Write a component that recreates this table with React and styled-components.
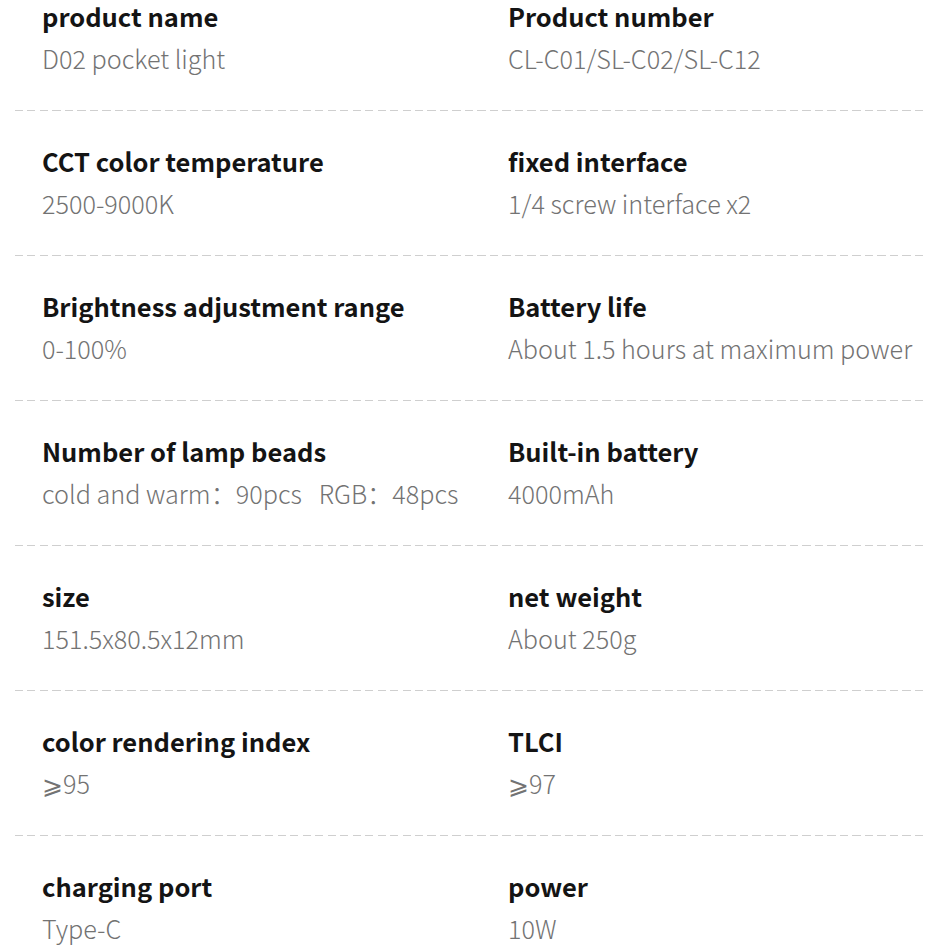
import React from "react";
import styled, { createGlobalStyle } from "styled-components";

const Global = createGlobalStyle`
  html, body { margin: 0; padding: 0; background: #ffffff; }
  body { font-family: "Noto Sans CJK SC", "Source Sans Pro", "Noto Sans", sans-serif; }
`;

const Page = styled.div`
  width: 945px;
  padding: 0 18px 0 15px;
  box-sizing: border-box;
`;

const Row = styled.div`
  display: grid;
  grid-template-columns: 466px 1fr;
  padding: ${(p) => (p.$first ? "0" : "34px")} 0 36px;
`;

const Separator = styled.div`
  height: 1px;
  width: 912px;
  background-image: repeating-linear-gradient(
    to right,
    #cfcfcf 0,
    #cfcfcf 8px,
    transparent 8px,
    transparent 12.5px
  );
`;

const Cell = styled.div`
  padding-left: 27px;
  display: flex;
  flex-direction: column;
`;

const Label = styled.div`
  font-size: 25.5px;
  line-height: 32px;
  font-weight: 700;
  color: #141414;
  white-space: nowrap;
`;

const Value = styled.div`
  margin-top: 10px;
  font-size: 25.2px;
  line-height: 32px;
  font-weight: 300;
  color: #737373;
  white-space: pre;
`;

const rows = [
  [
    ["product name", "D02 pocket light"],
    ["Product number", "CL-C01/SL-C02/SL-C12"],
  ],
  [
    ["CCT color temperature", "2500-9000K"],
    ["fixed interface", "1/4 screw interface x2"],
  ],
  [
    ["Brightness adjustment range", "0-100%"],
    ["Battery life", "About 1.5 hours at maximum power"],
  ],
  [
    ["Number of lamp beads", "cold and warm：90pcs   RGB：48pcs"],
    ["Built-in battery", "4000mAh"],
  ],
  [
    ["size", "151.5x80.5x12mm"],
    ["net weight", "About 250g"],
  ],
  [
    ["color rendering index", "⩾95"],
    ["TLCI", "⩾97"],
  ],
  [
    ["charging port", "Type-C"],
    ["power", "10W"],
  ],
];

export default function App() {
  return (
    <Page>
      <Global />
      {rows.map((r, i) => (
        <React.Fragment key={i}>
          {i > 0 && <Separator />}
          <Row $first={i === 0}>
            {r.map(([l, v]) => (
              <Cell key={l}>
                <Label>{l}</Label>
                <Value>{v}</Value>
              </Cell>
            ))}
          </Row>
        </React.Fragment>
      ))}
    </Page>
  );
}
